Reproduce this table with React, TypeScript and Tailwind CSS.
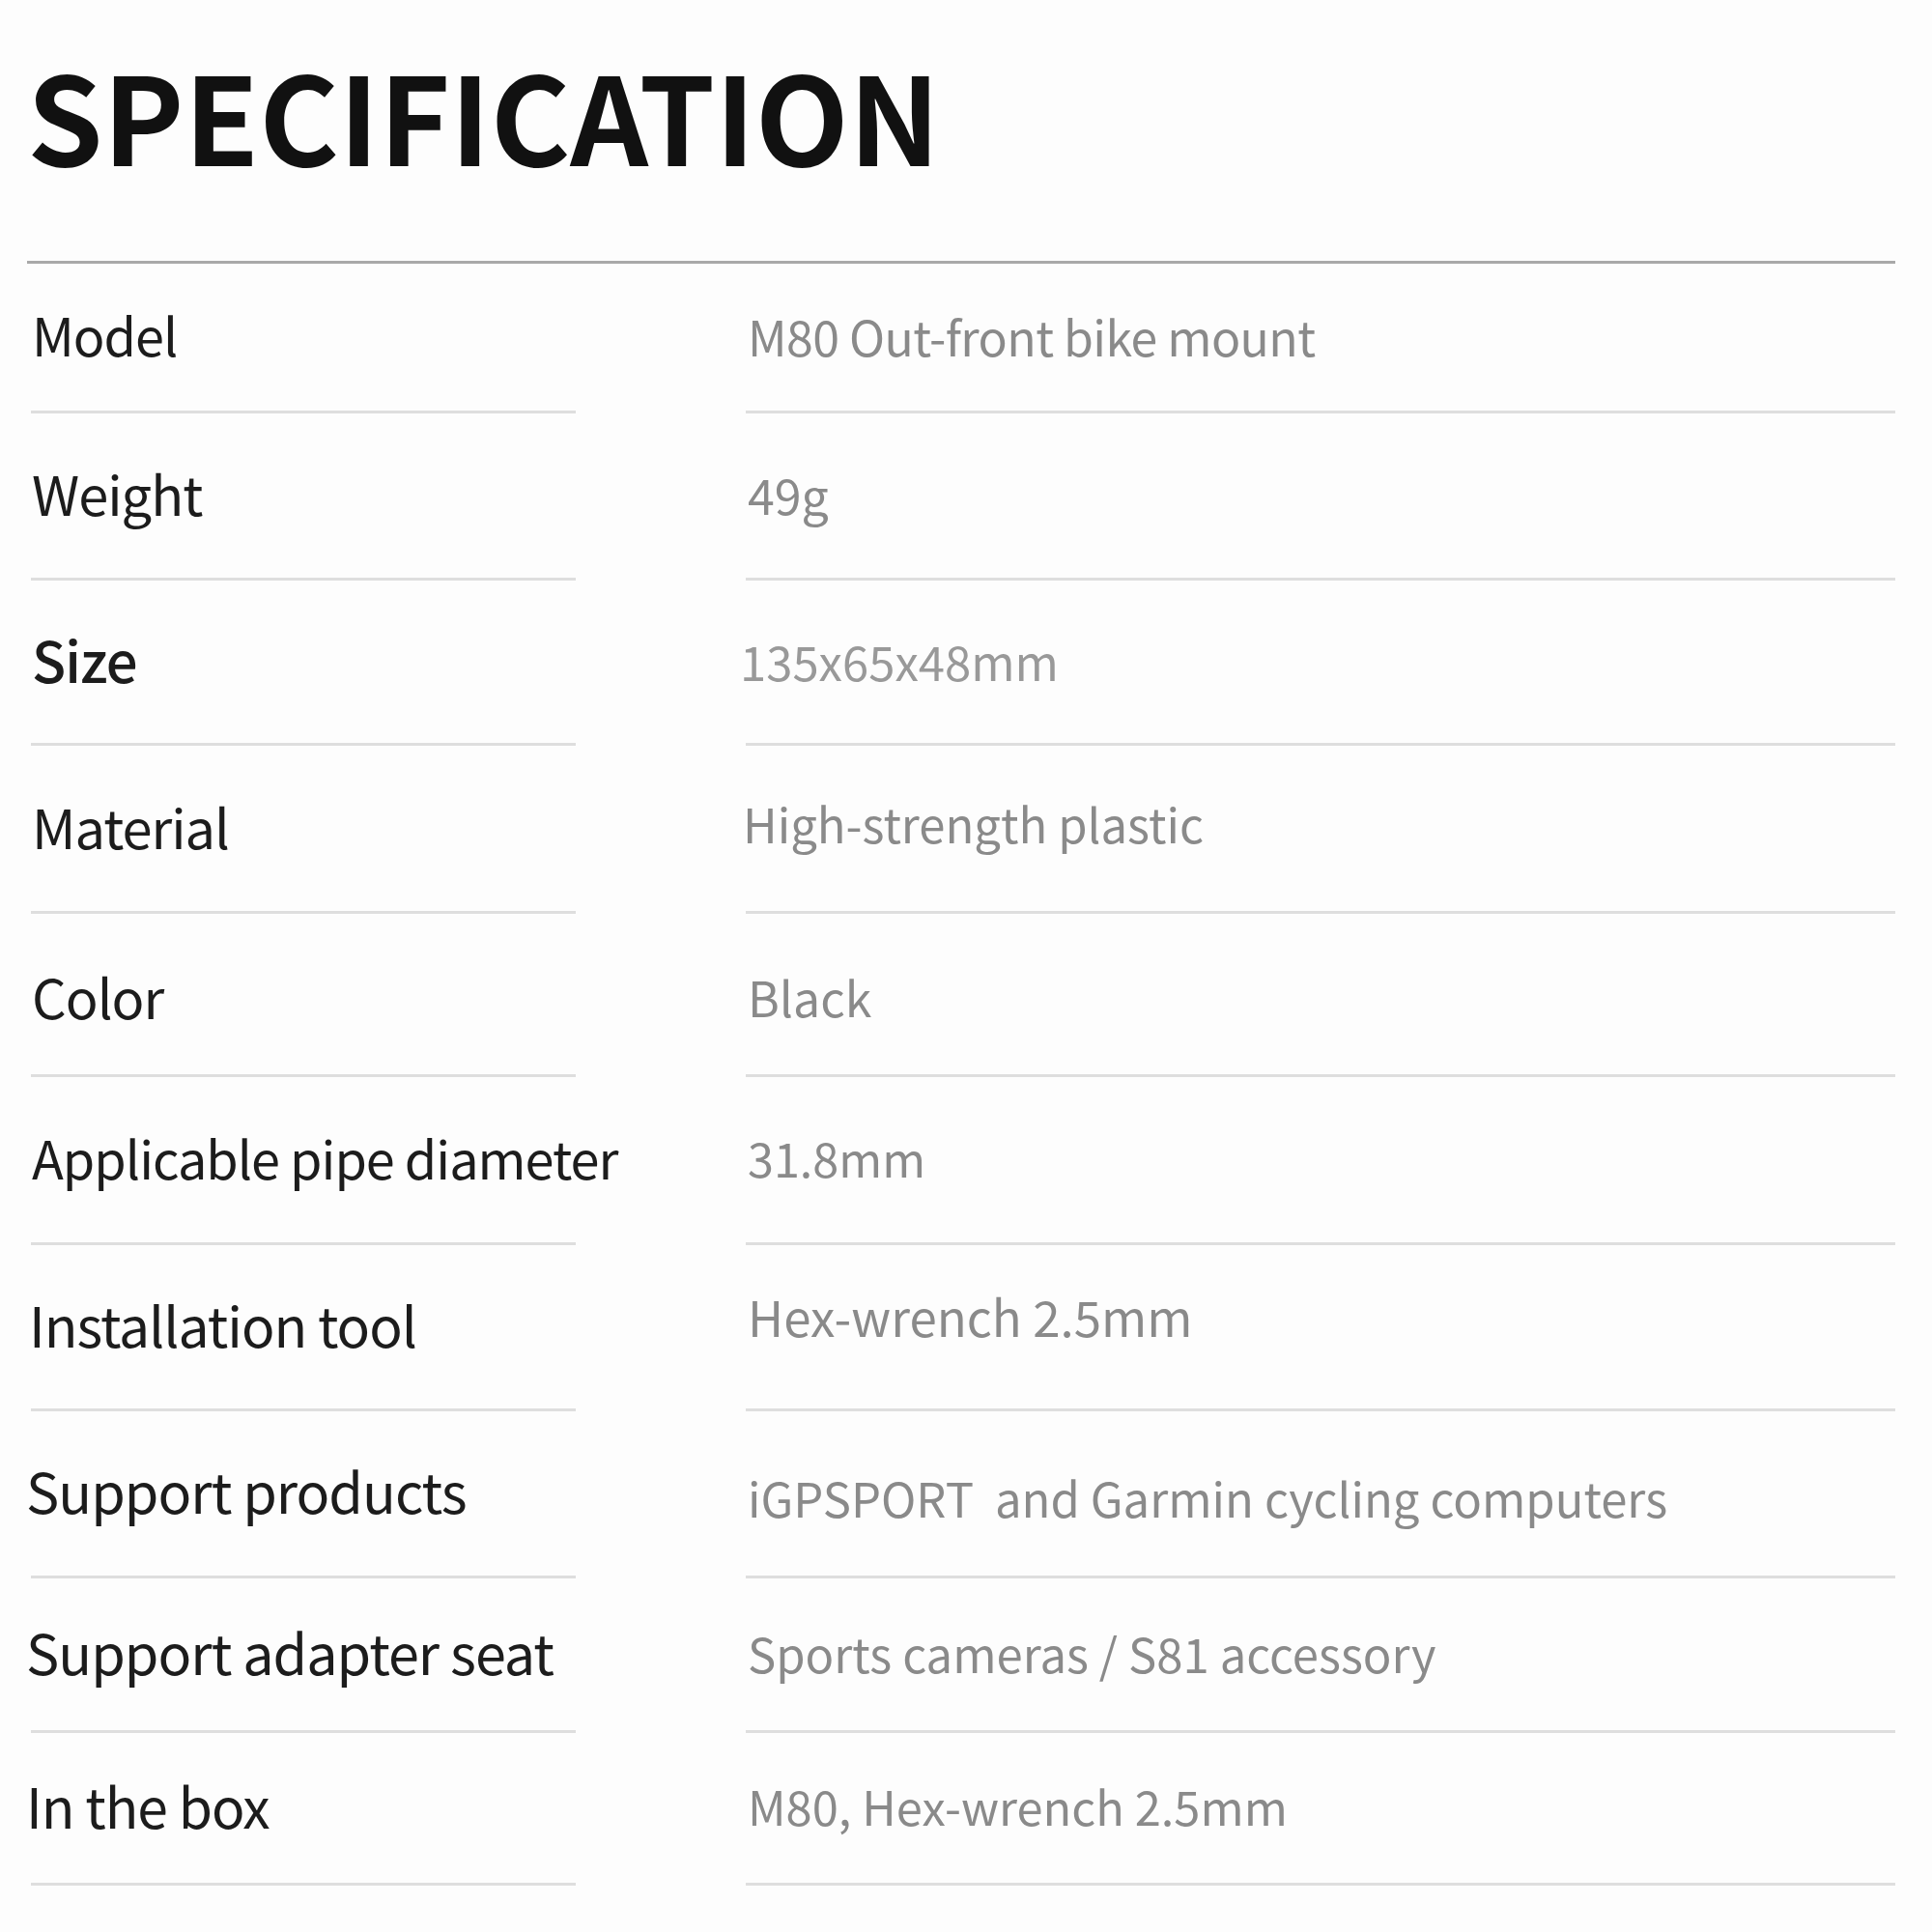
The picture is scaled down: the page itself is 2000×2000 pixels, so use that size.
const rows = [
  { label: 'Model', value: 'M80 Out-front bike mount', h: 'h-[155px]', l: 'text-[54px]', v: 'text-[50px] tracking-[-0.6px]' },
  { label: 'Weight', value: '49g', h: 'h-[173px]', l: 'text-[56px]', v: 'text-[50px]' },
  { label: 'Size', value: '135x65x48mm', h: 'h-[171px]', l: 'text-[58px] font-medium', v: 'text-[49px] -ml-[8px] text-[#999]' },
  { label: 'Material', value: 'High-strength plastic', h: 'h-[174px]', l: 'text-[56px]', v: 'text-[49px] -ml-[5px] pb-[8px]' },
  { label: 'Color', value: 'Black', h: 'h-[169px]', l: 'text-[56px] pt-[10px]', v: 'text-[50px] pt-[8px]' },
  { label: 'Applicable pipe diameter', value: '31.8mm', h: 'h-[174px]', l: 'text-[54px]', v: 'text-[48.5px]' },
  { label: 'Installation tool', value: 'Hex-wrench 2.5mm', h: 'h-[172px]', l: 'text-[57px] -ml-[3px]', v: 'text-[51px] pb-[18px]' },
  { label: 'Support products', value: 'iGPSPORT  and Garmin cycling computers', h: 'h-[173px]', l: 'text-[57.5px] -ml-[6px]', v: 'text-[49px] pt-[10px]' },
  { label: 'Support adapter seat', value: 'Sports cameras / S81 accessory', h: 'h-[160px]', l: 'text-[57.5px] -ml-[6px]', v: 'text-[49px]' },
  { label: 'In the box', value: 'M80, Hex-wrench 2.5mm', h: 'h-[158px]', l: 'text-[57px] -ml-[6px]', v: 'text-[48.8px]' },
];

export default function App() {
  return (
    <div
      className="w-[2000px] min-h-[2000px] bg-[#fdfdfd] pl-[28px] pr-[38px]"
      style={{ fontFamily: '"Noto Sans CJK SC", "Source Sans Pro", sans-serif' }}
    >
      <div className="h-[270px] pt-[54px]">
        <h1 className="text-[126px] leading-none font-bold text-[#111]">SPECIFICATION</h1>
      </div>
      <div className="h-[3px] bg-[#a9a9a9]" />

      {rows.map((r) => (
        <div key={r.label} className={`flex ${r.h}`}>
          <div className="ml-[4px] w-[564px] flex items-center pb-[6px] border-b-[3px] border-[#dedede]">
            <span className={`${r.l} pl-[1px] leading-none tracking-[-1px] text-[#1c1c1c] whitespace-nowrap`}>
              {r.label}
            </span>
          </div>
          <div className="ml-[176px] flex-1 flex items-center pb-[4px] border-b-[3px] border-[#dedede]">
            <span className={`${r.v} pl-[2px] leading-none text-[#8a8a8a] whitespace-pre`}>{r.value}</span>
          </div>
        </div>
      ))}
    </div>
  );
}
